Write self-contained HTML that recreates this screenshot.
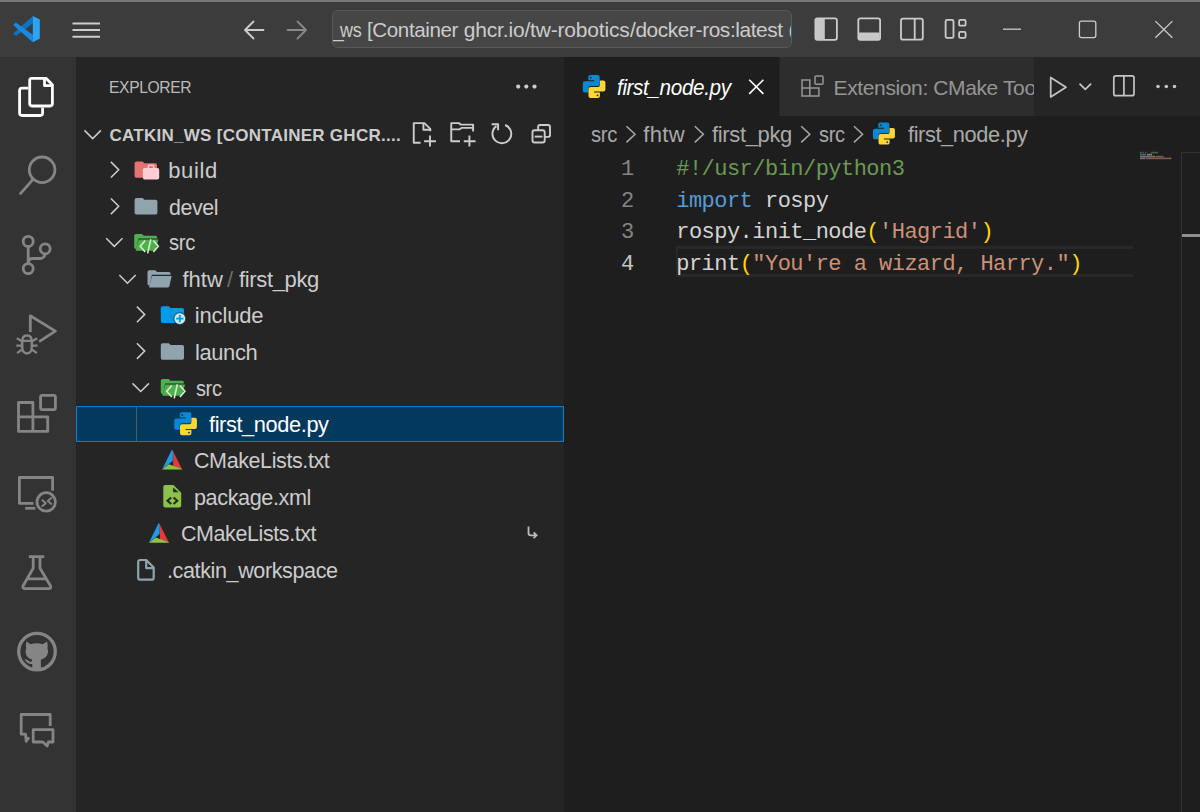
<!DOCTYPE html>
<html><head><meta charset="utf-8">
<style>
*{margin:0;padding:0;box-sizing:border-box}
html,body{width:1200px;height:812px;overflow:hidden;background:#1e1e1e;font-family:"Liberation Sans",sans-serif}
.a{position:absolute}
.t{position:absolute;white-space:nowrap;line-height:0;height:0}
#title{left:0;top:0;width:1200px;height:57px;background:#3c3c3c}
#topline{left:0;top:0;width:1200px;height:2px;background:#777777}
#act{left:0;top:57px;width:76px;height:755px;background:#333333}
#side{left:76px;top:57px;width:487px;height:755px;background:#252526}
#sideborder{left:563px;top:57px;width:1px;height:755px;background:#222427}
#tabs{left:564px;top:57px;width:636px;height:59px;background:#252526}
#tab1{left:564px;top:57px;width:215px;height:59px;background:#1e1e1e}
#tab2{left:779px;top:57px;width:255px;height:59px;background:#2d2d2d;border-left:1px solid #252526}
#editor{left:564px;top:116px;width:636px;height:696px;background:#1e1e1e}
#cc{left:332px;top:10px;width:460px;height:38px;border-radius:6px;background:#464646;border:1px solid #595959;overflow:hidden}
#sel{left:76px;top:406px;width:488px;height:36px;background:#04395e;border:1px solid #007fd4}
#guide{left:136px;top:407px;width:1px;height:34px;background:#585858}
#curline{left:676.3px;top:246px;width:456.5px;height:30.7px;border-top:3px solid #282828;border-bottom:3px solid #282828;border-left:2.6px solid #282828}
#vscroll{left:1181px;top:152px;width:19px;height:660px;border-left:1px solid #313131;border-top:1px solid #313131}
#cursorpos{left:1182px;top:232.5px;width:18px;height:5.5px;background:#909090;border-top:1.2px solid #191919;border-bottom:1.2px solid #191919}
.s{color:#cccccc}
.m{font-family:"Liberation Mono",monospace;font-size:22px;letter-spacing:-0.53px;color:#d4d4d4}
</style></head><body>
<div id="title" class="a"></div>
<div id="topline" class="a"></div>
<div id="act" class="a"></div>
<div id="side" class="a"></div>
<div id="sideborder" class="a"></div>
<div id="tabs" class="a"></div>
<div id="tab1" class="a"></div>
<div id="tab2" class="a"></div>
<div id="editor" class="a"></div>
<div id="sel" class="a"></div>
<div id="guide" class="a"></div>
<div id="curline" class="a"></div>
<div id="vscroll" class="a"></div>
<div id="cursorpos" class="a"></div>

<div id="cc" class="a"></div>

<div class="t s" style="left:109.1px;top:88.0px;font-size:17px;letter-spacing:-0.40px;transform:scaleX(0.9208);transform-origin:0 0;color:#bbbbbb">EXPLORER</div>
<div class="t s" style="left:109.5px;top:136.3px;font-size:17px;letter-spacing:0.27px;color:#cccccc;font-weight:bold">CATKIN_WS [CONTAINER GHCR....</div>
<div class="t s" style="left:168.3px;top:171.0px;font-size:22px;letter-spacing:0.59px">build</div>
<div class="t s" style="left:169.4px;top:207.7px;font-size:22px;letter-spacing:-0.40px;transform:scaleX(0.9719);transform-origin:0 0">devel</div>
<div class="t s" style="left:168.9px;top:243.4px;font-size:22px;letter-spacing:-0.40px;transform:scaleX(0.9220);transform-origin:0 0">src</div>
<div class="t s" style="left:182.4px;top:279.9px;font-size:22px;letter-spacing:0.05px">fhtw</div>
<div class="t s" style="left:227.0px;top:279.9px;font-size:22px;letter-spacing:0.00px;color:#6e6e6e">/</div>
<div class="t s" style="left:239.0px;top:279.9px;font-size:22px;letter-spacing:-0.36px">first_pkg</div>
<div class="t s" style="left:194.8px;top:315.8px;font-size:22px;letter-spacing:-0.16px">include</div>
<div class="t s" style="left:194.8px;top:352.5px;font-size:22px;letter-spacing:-0.40px;transform:scaleX(0.9985);transform-origin:0 0">launch</div>
<div class="t s" style="left:195.6px;top:388.7px;font-size:22px;letter-spacing:-0.40px;transform:scaleX(0.9079);transform-origin:0 0">src</div>
<div class="t s" style="left:209.2px;top:425.3px;font-size:22px;letter-spacing:-0.40px;transform:scaleX(0.9904);transform-origin:0 0;color:#ffffff">first_node.py</div>
<div class="t s" style="left:194.3px;top:460.7px;font-size:22px;letter-spacing:-0.40px;transform:scaleX(0.9765);transform-origin:0 0">CMakeLists.txt</div>
<div class="t s" style="left:194.3px;top:497.6px;font-size:22px;letter-spacing:-0.40px;transform:scaleX(0.9820);transform-origin:0 0">package.xml</div>
<div class="t s" style="left:181.3px;top:533.7px;font-size:22px;letter-spacing:-0.40px;transform:scaleX(0.9750);transform-origin:0 0">CMakeLists.txt</div>
<div class="t s" style="left:167.4px;top:571.2px;font-size:22px;letter-spacing:-0.40px;transform:scaleX(0.9800);transform-origin:0 0">.catkin_workspace</div>
<div class="t s" style="left:617.0px;top:87.8px;font-size:22px;letter-spacing:-0.40px;transform:scaleX(0.9410);transform-origin:0 0;color:#ffffff;font-style:italic">first_node.py</div>
<div class="t s" style="left:590.8px;top:135.2px;font-size:22px;letter-spacing:-0.40px;transform:scaleX(0.9220);transform-origin:0 0;color:#a9a9a9">src</div>
<div class="t s" style="left:643.3px;top:135.2px;font-size:22px;letter-spacing:0.31px;color:#a9a9a9">fhtw</div>
<div class="t s" style="left:712.0px;top:135.2px;font-size:22px;letter-spacing:-0.36px;color:#a9a9a9">first_pkg</div>
<div class="t s" style="left:818.5px;top:135.2px;font-size:22px;letter-spacing:-0.40px;transform:scaleX(0.9114);transform-origin:0 0;color:#a9a9a9">src</div>
<div class="t s" style="left:908.0px;top:135.2px;font-size:22px;letter-spacing:-0.40px;transform:scaleX(0.9904);transform-origin:0 0;color:#a9a9a9">first_node.py</div>
<div class="a" style="left:333px;top:11px;width:458px;height:36px;overflow:hidden"><div class="t s" style="left:7.1px;top:18.8px;font-size:21px;letter-spacing:-0.40px;transform:scaleX(0.8558);transform-origin:0 0;color:#cccccc">ws</div><div class="t s" style="left:34.3px;top:18.8px;font-size:21px;letter-spacing:-0.40px;transform:scaleX(0.9800);transform-origin:0 0;color:#cccccc">[Container</div><div class="t s" style="left:130.8px;top:18.8px;font-size:21px;letter-spacing:-0.18px;color:#cccccc">ghcr.io/tw-robotics</div><div class="t s" style="left:297.0px;top:18.8px;font-size:21px;letter-spacing:-0.40px;transform:scaleX(0.9927);transform-origin:0 0;color:#cccccc">/docker-ros:latest</div><div class="t s" style="left:-1.0px;top:18.8px;font-size:21px;letter-spacing:0.00px;color:#cccccc">_</div><div class="t s" style="left:455.6px;top:18.8px;font-size:21px;letter-spacing:0.00px;color:#cccccc">(</div></div>
<div class="a" style="left:779px;top:57px;width:255px;height:59px;overflow:hidden"><div class="t s" style="left:54.6px;top:31.0px;font-size:21px;letter-spacing:-0.38px;color:#969696">Extension: CMake Tools</div></div>
<div class="t m" style="left:621px;top:170.0px;color:#858585">1</div>
<div class="t m" style="left:676.25px;top:170.0px"><span style="color:#6a9955">#!/usr/bin/python3</span></div>
<div class="t m" style="left:621px;top:201.5px;color:#858585">2</div>
<div class="t m" style="left:676.25px;top:201.5px"><span style="color:#569cd6">import</span> rospy</div>
<div class="t m" style="left:621px;top:233.0px;color:#858585">3</div>
<div class="t m" style="left:676.25px;top:233.0px">rospy.init_node<span style="color:#ffd700">(</span><span style="color:#ce9178">'Hagrid'</span><span style="color:#ffd700">)</span></div>
<div class="t m" style="left:621px;top:264.6px;color:#c6c6c6">4</div>
<div class="t m" style="left:676.25px;top:264.6px">print<span style="color:#ffd700">(</span><span style="color:#ce9178">"You're a wizard, Harry."</span><span style="color:#ffd700">)</span></div>
<svg class="a" style="left:0;top:0" width="1200" height="812">
<defs>
<g id="py">
<path fill="#0a88d4" d="M7.5,0H14.9Q16.9,0 16.9,2V9Q16.9,11 14.9,11H7.5Q5.5,11 5.5,13V17.4H2Q0,17.4 0,15.4V8.3Q0,6.3 2,6.3H11.3V5.3H5.5V2Q5.5,0 7.5,0Z"/>
<circle cx="7.9" cy="2.6" r="0.9" fill="#1e1e1e"/>
<path fill="#fdd835" d="M15.1,22.9H7.7Q5.7,22.9 5.7,20.9V13.9Q5.7,11.9 7.7,11.9H15.1Q17.1,11.9 17.1,9.9V5.5H20.6Q22.6,5.5 22.6,7.5V14.6Q22.6,16.6 20.6,16.6H11.3V17.6H17.1V20.9Q17.1,22.9 15.1,22.9Z"/>
<circle cx="14.7" cy="20.3" r="0.9" fill="#1e1e1e"/>
</g>
<g id="cmake">
<path fill="#1e9be8" d="M9.6,0L10.9,0.6L10.7,10.7L0.6,18.9L0,19.5Z"/>
<path fill="#e53935" d="M10.3,0L20,19.2L11.1,16.2L10.9,0.6Z"/>
<path fill="#8bc34a" d="M0,19.5L6.9,14.2L20,18.9L20,19.5Z"/>
</g>
</defs>
<!-- title bar -->
<path fill="#0b72c4" d="M32.8,16.1L32.8,23.6L16,36L13.4,33.6Z"/>
<path fill="#1a8ae0" d="M13.2,25L15.8,22.6L32.8,34.8L32.8,42.2Z"/>
<path fill="#2aa4f4" d="M32.8,16.1L39.8,19.6L39.8,38.5L32.8,42.2Z"/>
<g stroke="#cccccc" stroke-width="2" fill="none">
<path d="M72.5,23.5H100M72.5,30H100M72.5,36.7H100"/>
</g>
<g stroke="#cccccc" stroke-width="1.8" fill="none" stroke-linecap="round" stroke-linejoin="round">
<path d="M245,30H263.5M245,30L253.5,21.5M245,30L253.5,38.5"/>
</g>
<g stroke="#8a8a8a" stroke-width="1.8" fill="none" stroke-linecap="round" stroke-linejoin="round">
<path d="M306,30H287.5M306,30L297.5,21.5M306,30L297.5,38.5"/>
</g>
<g stroke="#cccccc" stroke-width="1.8" fill="none">
<rect x="815.4" y="18.4" width="21.5" height="21.4" rx="2"/>
<rect x="858.3" y="18.4" width="21.8" height="21.4" rx="2"/>
<rect x="901" y="18.7" width="21.8" height="21" rx="2"/>
<path d="M914.7,18.7V39.7"/>
<rect x="945.6" y="19.9" width="7.9" height="18" rx="1.5"/>
<rect x="959.1" y="19.9" width="6.5" height="5.8" rx="1.3"/>
<rect x="959.1" y="31.9" width="6.5" height="6" rx="1.3"/>
</g>
<rect x="815.8" y="18.8" width="9" height="20.6" rx="1" fill="#c8c8c8"/>
<rect x="858.7" y="32.4" width="21" height="7" rx="1" fill="#c8c8c8"/>
<g stroke="#cccccc" stroke-width="1.3" fill="none">
<path d="M1003,29.2H1021"/>
<rect x="1079.4" y="21.2" width="16.4" height="16.4" rx="2"/>
<path d="M1155.3,21.1L1172.4,37.8M1172.4,21.1L1155.3,37.8"/>
</g>
<!-- activity bar -->
<g stroke="#ffffff" stroke-width="2.8" fill="none" stroke-linejoin="round">
<path d="M31.5,78.3H46L52.4,84.7V103.6Q52.4,106 50,106H32Q29.7,106 29.7,103.6V80.6Q29.7,78.3 31.5,78.3Z"/>
<path d="M44.5,78.3V85.7H52.4"/>
<path d="M28.3,88.2H22Q19.6,88.2 19.6,90.6V113.1Q19.6,115.5 22,115.5H40.2Q42.6,115.5 42.6,113.1V107.4"/>
</g>
<g stroke="#858585" stroke-width="2.8" fill="none" stroke-linejoin="round">
<circle cx="42.1" cy="169.8" r="12.8"/>
<path d="M33,179.3L19.8,194.4"/>
<circle cx="28.2" cy="241.4" r="5"/>
<circle cx="45.2" cy="248.8" r="5"/>
<circle cx="28.2" cy="268.6" r="5"/>
<path d="M28.2,246.4V263.6"/>
<path d="M28.2,262.5C28.2,259.8 30,258.5 33,258.5H40C42.6,258.5 44.6,256.8 45.2,253.8"/>
<path d="M30.3,332.1V315.8L55.4,331.1L39.1,341.6"/>
<path d="M27,335.4C23.5,335.4 22.2,338.5 22.2,341.5V347.5C22.2,351 24.3,353.4 27,353.4C29.7,353.4 31.8,351 31.8,347.5V341.5C31.8,338.5 30.5,335.4 27,335.4Z" stroke-width="2.5"/>
<path d="M22.2,340.9H31.8M16.8,338.2L21.5,341M16.4,345.6H21.5M17.1,353.1L21.8,349.8M37.2,338.2L32.5,341M37.6,345.6H32.5M36.9,353.1L32.2,349.8" stroke-width="2.3"/>
<path d="M18.5,402.5H32.9V416.9H47.7V431.4H18.5ZM18.5,416.9H32.9V431.4"/>
<rect x="40.6" y="395.4" width="14.8" height="14.2" rx="1.5"/>
<path d="M33.5,503.4H19.4V477.5H52.6V490.8"/>
<path d="M25.2,508.3H35.4"/>
<circle cx="46.2" cy="501.9" r="9.2"/>
<path d="M41.8,499.8L45.8,503.2L41.8,506.6M51.8,497.6L47.8,501L51.8,504.4" stroke-width="2"/>
<path d="M28.9,556.6H44.3M33.2,556.6V568.3L23,586Q22.2,588.6 25,588.6H48.6Q51.4,588.6 50.6,586L40,568.3V556.6M27.5,578.8H45.8"/>
<circle cx="37" cy="651.6" r="18.3" stroke-width="3.3"/>
<path d="M21.2,726.2V714.5H50.2V725.9M21.2,722V734.2H25.5L26.2,741.3L29,737.2"/>
<path d="M33.2,729.6H53V742H48.3L47.2,746L42.8,742H33.2Z"/>
</g>
<path fill="#858585" d="M26.5,641.5L30.5,644.2Q37,642.3 42.8,644.2L47,641.5Q48.2,645 47.5,648.5Q48.5,650.5 47.8,653.5Q46,658.5 40.9,659.5V669H32.3V664Q27,664.5 24.5,659Q28,659.5 30,662Q31.8,662 32.3,659.5Q27.2,658.5 25.8,653.5Q25.2,650.5 26.2,648.5Q25.5,645 26.5,641.5Z"/>
<!-- sidebar header -->
<g fill="#cccccc">
<circle cx="518.2" cy="86.6" r="2.1"/><circle cx="526.3" cy="86.6" r="2.1"/><circle cx="534.5" cy="86.6" r="2.1"/>
</g>
<g stroke="#cccccc" stroke-width="1.9" fill="none" stroke-linejoin="round">
<path d="M420.6,142.8H413.75V123.1H424.4L430.3,128.9V131.3"/>
<path d="M423.4,123.1V129.7H430.3"/>
<path d="M424.1,141.25H435.9M430,135.6V146.6"/>
<path d="M460,141.25H451.25V123.1H458.75L460.9,124.6H473.1V131.6"/>
<path d="M451.25,129.4H459.4L461.5,127.9H473.1"/>
<path d="M463.75,141.25H475.6M469.4,135.6V146.6"/>
<path d="M505.1,125A9.4,9.4 0 1 1 496.5,126.1"/>
<path d="M491.6,124.25H498.1V130.2"/>
<rect x="532.5" y="130.3" width="12.2" height="12.2" rx="2"/>
<path d="M538.1,130.3V127Q538.1,125 540.1,125H548Q550,125 550,127V134.9Q550,136.9 548,136.9H544.7"/>
<path d="M534.7,136.6H542.5"/>
</g>
<!-- tree chevrons -->
<g stroke="#cccccc" stroke-width="1.5" fill="none" stroke-linejoin="miter">
<path d="M110.9,161.9L118.7,169.7L110.9,177.5"/>
<path d="M110.9,198.5L118.7,206.3L110.9,214.1"/>
<path d="M106.2,238.3L114.3,246.4L122.5,238.3"/>
<path d="M119.3,275L127.5,283.2L135.7,275"/>
<path d="M136.9,306.6L144.7,314.4L136.9,322.2"/>
<path d="M136.9,343.3L144.7,351.1L136.9,358.9"/>
<path d="M132.5,383.4L140.7,391.5L148.9,383.4"/>
<path d="M84.5,130.4L92.7,138.6L100.9,130.4"/>
</g>
<!-- folder icons -->
<path fill="#e57373" d="M136.4,161.5H142.6L144.4,163.2H155.2Q157,163.2 157,165V176Q157,177.8 155.2,177.8H136.4Q134.6,177.8 134.6,176V163.3Q134.6,161.5 136.4,161.5Z"/>
<path fill="#ffcdd2" d="M144.6,168H157.4Q159.2,168 159.2,169.8V177.8Q159.2,179.6 157.4,179.6H144.6Q142.8,179.6 142.8,177.8V169.8Q142.8,168 144.6,168Z"/>
<path fill="none" stroke="#ffcdd2" stroke-width="1.6" d="M148.3,168.5V166.6Q148.3,165.2 149.7,165.2H152.3Q153.7,165.2 153.7,166.6V168.5"/>
<path fill="#90a4ae" d="M136.4,198.1H142.6L144.4,199.8H155.6Q157.4,199.8 157.4,201.6V212.7Q157.4,214.5 155.6,214.5H136.4Q134.6,214.5 134.6,212.7V199.9Q134.6,198.1 136.4,198.1Z"/>
<path fill="#90a4ae" d="M162.6,343.3H168.8L170.6,345H182.2Q184,345 184,346.8V358Q184,359.8 182.2,359.8H162.6Q160.8,359.8 160.8,358V345.1Q160.8,343.3 162.6,343.3Z"/>
<path fill="#039be5" d="M162.6,306.2H168.8L170.6,307.9H182.2Q184,307.9 184,309.7V321.2Q184,323 182.2,323H162.6Q160.8,323 160.8,321.2V308Q160.8,306.2 162.6,306.2Z"/>
<circle cx="179.8" cy="318.6" r="5.9" fill="#c4ecfd" stroke="#252526" stroke-width="0.8"/>
<path stroke="#039be5" stroke-width="1.9" d="M176.1,318.6H183.5M179.8,314.9V322.3"/>
<!-- open folders -->
<path fill="#4caf50" d="M136,234H142L143.8,235.7H155.5Q157.2,235.7 157.2,237.4V238.5H138.5L136.4,249H135.9Q134.2,249 134.2,247.3V235.7Q134.2,234 136,234Z"/>
<path fill="#4caf50" d="M138.7,239.6H158.3L156,249.3Q155.6,250.8 154,250.8H135.6Z"/>
<path fill="none" stroke="#dcedc8" stroke-width="1.6" d="M145.2,240.5L140.2,246.3L145.2,252.1M153.3,240.5L158.3,246.3L153.3,252.1M150.8,239.2L147.6,253.4"/>
<path fill="#4caf50" d="M162.6,379H168.6L170.4,380.7H182.2Q183.9,380.7 183.9,382.4V383.5H165.2L163,394H162.5Q160.8,394 160.8,392.3V380.7Q160.8,379 162.6,379Z"/>
<path fill="#4caf50" d="M165.3,384.6H185L182.7,394.3Q182.3,395.8 180.7,395.8H162.3Z"/>
<path fill="none" stroke="#dcedc8" stroke-width="1.6" d="M171.8,385.5L166.8,391.3L171.8,397.1M179.9,385.5L184.9,391.3L179.9,397.1M177.4,384.2L174.2,398.4"/>
<path fill="#90a4ae" d="M149.3,270.2H155.3L157.1,271.9H168.9Q170.6,271.9 170.6,273.6V274.7H151.9L149.7,285.5H149.2Q147.5,285.5 147.5,283.8V271.9Q147.5,270.2 149.3,270.2Z"/>
<path fill="#90a4ae" d="M152,275.9H171.7L169.4,286Q169,287.5 167.4,287.5H149Z"/>
<!-- file icons -->
<use href="#py" transform="translate(174.3,412.3)"/>
<use href="#cmake" transform="translate(162.1,450.1)"/>
<use href="#cmake" transform="translate(148.9,523.3)"/>
<path fill="#8bc34a" d="M165.3,485H173.5L181.2,492.7V505.4Q181.2,507.4 179.2,507.4H165.3Q163.3,507.4 163.3,505.4V487Q163.3,485 165.3,485Z"/>
<path fill="#252526" d="M173.1,487.4V492.2H178.6Z"/>
<path fill="none" stroke="#252526" stroke-width="2" d="M171.2,497.5L167.4,500.8L171.2,504.1M173.5,497.5L177.3,500.8L173.5,504.1"/>
<path fill="none" stroke="#90a4ae" stroke-width="2.2" stroke-linejoin="round" d="M146.2,560H140.2Q138.2,560 138.2,562V577.7Q138.2,579.7 140.2,579.7H151.7Q153.7,579.7 153.7,577.7V567.5L146.2,560V568.2H153.7"/>
<!-- symlink arrow -->
<path fill="none" stroke="#bbbbbb" stroke-width="1.8" d="M528.5,526.5V533Q528.5,535.3 530.8,535.3H536.5M533.6,532.4L536.6,535.3L533.6,538.2"/>
<!-- tabs -->
<use href="#py" transform="translate(582.8,75)"/>
<path stroke="#ffffff" stroke-width="1.6" d="M749.2,79.7L763.4,93.9M763.4,79.7L749.2,93.9"/>
<g stroke="#969696" stroke-width="1.5" fill="none">
<path d="M802,80H809.8V88H818.9V96H802ZM802,88H809.8V96"/>
<rect x="815" y="76.1" width="8" height="8.2" rx="1"/>
</g>
<g stroke="#c5c5c5" stroke-width="1.7" fill="none" stroke-linejoin="round">
<path d="M1050.7,77.5V97L1066,87.3Z"/>
<path d="M1079.5,83.6L1085.3,89.4L1091.1,83.6"/>
<rect x="1113.8" y="75.9" width="20.2" height="19.8" rx="2"/>
<path d="M1123.9,75.9V95.7"/>
</g>
<g fill="#c5c5c5">
<circle cx="1158" cy="86.5" r="1.8"/><circle cx="1166.3" cy="86.5" r="1.8"/><circle cx="1174.5" cy="86.5" r="1.8"/>
</g>
<!-- breadcrumbs -->
<g stroke="#a9a9a9" stroke-width="1.5" fill="none">
<path d="M626.4,126.2L635,134.3L626.4,142.4"/>
<path d="M694.8,126.2L703.4,134.3L694.8,142.4"/>
<path d="M801.2,126.2L809.8,134.3L801.2,142.4"/>
<path d="M854,126.2L862.6,134.3L854,142.4"/>
</g>
<use href="#py" transform="translate(873,122.6) scale(0.97,0.96)"/>
<!-- minimap -->
<g opacity="0.55">
<rect x="1140" y="151.8" width="2" height="1.6" fill="#6a9955"/><rect x="1143" y="151.8" width="1" height="1.6" fill="#6a9955"/><rect x="1145" y="151.8" width="1.5" height="1.6" fill="#6a9955"/><rect x="1151" y="151.8" width="7" height="1.6" fill="#6a9955"/>
<rect x="1140" y="153.8" width="6" height="1.6" fill="#569cd6"/><rect x="1147" y="153.8" width="5" height="1.6" fill="#d4d4d4"/>
<rect x="1140" y="155.8" width="14" height="1.6" fill="#bbbbbb"/><rect x="1154" y="155.8" width="1" height="1.6" fill="#ffd700"/><rect x="1155.5" y="155.8" width="8" height="1.6" fill="#ce9178"/>
<rect x="1140" y="157.6" width="5.5" height="1.6" fill="#bbbbbb"/><rect x="1146" y="157.6" width="24" height="1.6" fill="#ce9178"/><rect x="1170" y="157.6" width="1.2" height="1.6" fill="#ffd700"/>
</g>
</svg>
</body></html>
